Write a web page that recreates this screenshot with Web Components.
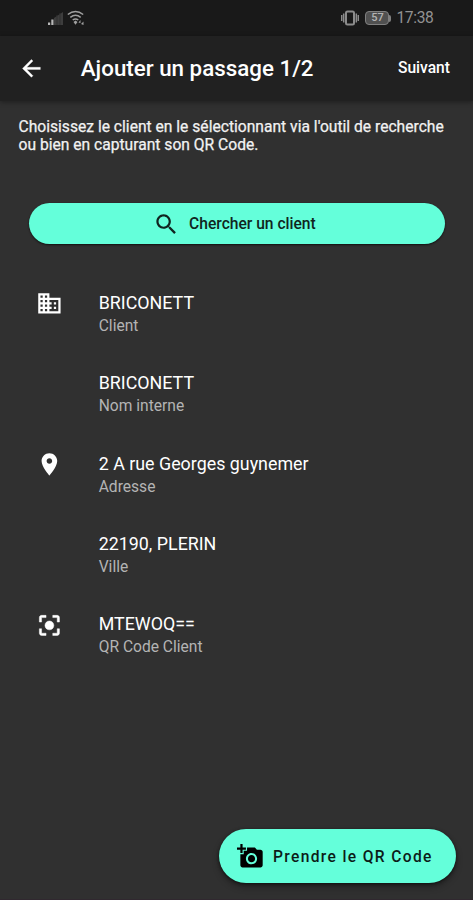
<!DOCTYPE html>
<html lang="fr">
<head>
<meta charset="utf-8">
<title>Ajouter un passage</title>
<style>
html,body{margin:0;height:100%;background:#303030}
body{font-family:Roboto,sans-serif;color:#fff;overflow:hidden}
</style>
</head>
<body>
<passage-screen></passage-screen>
<script>
const define = (name, html) => {
  const t = document.createElement('template');
  t.innerHTML = html;
  customElements.define(name, class extends HTMLElement {
    constructor() {
      super();
      this.attachShadow({mode: 'open'}).append(t.content.cloneNode(true));
    }
  });
};

const ICONS = {
  back: 'M20 11H7.83l5.59-5.59L12 4l-8 8 8 8 1.41-1.41L7.83 13H20v-2z',
  search: 'M15.5 14h-.79l-.28-.27C15.41 12.59 16 11.11 16 9.5 16 5.91 13.09 3 9.5 3S3 5.91 3 9.5 5.91 16 9.5 16c1.61 0 3.09-.59 4.23-1.57l.27.28v.79l5 4.99L20.49 19l-4.99-5zm-6 0C7.01 14 5 11.99 5 9.5S7.01 5 9.5 5 14 7.01 14 9.5 11.99 14 9.5 14z',
  business: 'M12 7V3H2v18h20V7H12zM6 19H4v-2h2v2zm0-4H4v-2h2v2zm0-4H4V9h2v2zm0-4H4V5h2v2zm4 12H8v-2h2v2zm0-4H8v-2h2v2zm0-4H8V9h2v2zm0-4H8V5h2v2zm10 12h-8v-2h2v-2h-2v-2h2v-2h-2V9h8v10zm-2-8h-2v2h2v-2zm0 4h-2v2h2v-2z',
  place: 'M12 2C8.13 2 5 5.13 5 9c0 5.25 7 13 7 13s7-7.75 7-13c0-3.87-3.13-7-7-7zm0 9.5c-1.38 0-2.5-1.12-2.5-2.5s1.12-2.5 2.5-2.5 2.5 1.12 2.5 2.5-1.12 2.5-2.5 2.5z',
  focus: 'M5 15H3v4c0 1.1.9 2 2 2h4v-2H5v-4zM5 5h4V3H5c-1.1 0-2 .9-2 2v4h2V5zm14-2h-4v2h4v4h2V5c0-1.1-.9-2-2-2zm0 16h-4v2h4c1.1 0 2-.9 2-2v-4h-2v4zM12 8c-2.21 0-4 1.79-4 4s1.79 4 4 4 4-1.79 4-4-1.79-4-4-4z',
  camera: 'M3 4V1h2v3h3v2H5v3H3V6H0V4h3zm3 6V7h3V4h7l1.83 2H21c1.1 0 2 .9 2 2v12c0 1.1-.9 2-2 2H5c-1.1 0-2-.9-2-2V10h3zm7 9c2.76 0 5-2.24 5-5s-2.24-5-5-5-5 2.24-5 5 2.24 5 5 5zm-3.2-5c0 1.77 1.43 3.2 3.2 3.2s3.2-1.43 3.2-3.2-1.43-3.2-3.2-3.2-3.2 1.43-3.2 3.2z'
};
customElements.define('md-icon', class extends HTMLElement {
  constructor() {
    super();
    this.attachShadow({mode: 'open'});
  }
  connectedCallback() {
    this.shadowRoot.innerHTML = `<style>:host{display:block;flex:none;width:26.8px;height:26.8px}svg{display:block;width:100%;height:100%;fill:currentColor;stroke:currentColor;stroke-width:var(--weight,0)}</style><svg viewBox="0 0 24 24"><path d="${ICONS[this.getAttribute('name')] || ''}"/></svg>`;
  }
});

define('status-bar', `<style>
:host{display:flex;align-items:center;box-sizing:border-box;height:36px;padding:0 39.500px 0 47px;background:#191919;color:#929292}
svg{display:block;flex:none}
.gap{flex:1}
.time{font-size:15.6px;line-height:20px;margin-left:5px;letter-spacing:-.35px}
.bat{display:flex;align-items:center;justify-content:center;box-sizing:border-box;width:24px;height:14px;margin-left:6px;border:1.5px solid #808080;border-radius:4px;background:#505050;font-size:11px;font-weight:500;line-height:12px;color:#b4b4b4}
.tip{width:2px;height:7px;background:#808080;border-radius:0 2px 2px 0}
</style>
<svg width="17" height="16" viewBox="0 0 17 16"><path fill="#3d3d3d" d="M7 8 16 2V15H7z"/><path fill="#b8b8b8" d="M1 12.5h2.2V15H1zM4.3 9.500h2.200V15H4.300z"/><path stroke="#303030" d="M10 5v10M13 3v12"/></svg>
<svg width="19" height="16" viewBox="0 0 19 16" style="margin-left:3px"><g fill="none" stroke="#a0a0a0" stroke-width="1.5"><path d="M.8 4.5Q8.500-1.500 16.200 4.500M3.300 7.300Q8.500 3.200 13.700 7.300M5.700 10Q8.500 7.800 11.300 10"/></g><path fill="#a0a0a0" d="m6.500 12 2-1.500 2 1.500-2 2.800zM11.500 12.500l2-2.500v3zM14 14l2.500-2.500V15z"/></svg>
<span class="gap"></span>
<svg width="18" height="16" viewBox="0 0 18 16"><g fill="none" stroke="#8c8c8c"><rect x="5" y="1.500" width="8" height="13" rx="1.500" stroke-width="2"/><path stroke-width="1.500" d="M2.700 3.500v9M15.300 3.500v9M.7 5v6M17.300 5v6"/></g></svg>
<span class="bat">57</span><span class="tip"></span>
<span class="time">17:38</span>`);

define('app-bar', `<style>
:host{display:flex;align-items:center;box-sizing:border-box;height:65px;padding:0 23px 0 18px;background:#212121;box-shadow:0 1px 5px rgba(0,0,0,.4);--weight:.3px}
.title{flex:1;margin-left:36px;padding-bottom:2px;font-size:22.35px;font-weight:500;line-height:28px;white-space:nowrap}
.action{padding-bottom:2px;font-size:15.6px;font-weight:500;line-height:20px;white-space:nowrap}
</style><md-icon name="back"></md-icon><span class="title"><slot></slot></span><span class="action"><slot name="action"></slot></span>`);

define('search-button', `<style>
:host{display:flex;align-items:center;justify-content:center;box-sizing:border-box;height:41px;margin:0 28px 0 29px;padding-right:5px;border-radius:21px;background:#64ffda;color:#102520;box-shadow:0 1px 2px #111;font-size:15.6px;font-weight:500;line-height:20px}
md-icon{margin-right:9px}
</style><md-icon name="search"></md-icon><span><slot></slot></span>`);

define('info-tile', `<style>
:host{display:flex;height:80.3px;padding-left:36.300px}
.icon{width:62.400px;padding-top:16.500px}
.title{font-size:17.85px;line-height:23px;padding-top:17px;padding-bottom:1px}
.sub{font-size:15.6px;line-height:23px;color:#b4b4b4}
</style><div class="icon"><slot name="icon"></slot></div><div class="text"><div class="title"><slot></slot></div><div class="sub"><slot name="sub"></slot></div></div>`);

define('qr-button', `<style>
:host{display:flex;align-items:center;box-sizing:border-box;width:237px;height:54px;padding:2px 0 0 18px;border-radius:27px;background:#64ffda;color:#0c1c18;box-shadow:0 1px 3px #111,0 4px 7px rgba(0,0,0,.3);font-size:15.6px;font-weight:500;line-height:20px;letter-spacing:1.35px;white-space:nowrap}
md-icon{margin-right:9.200px;color:#000}
</style><md-icon name="camera"></md-icon><span><slot></slot></span>`);

define('passage-screen', `<style>
:host{display:flex;flex-direction:column;box-sizing:border-box;width:473px;height:900px;background:#303030;border-bottom:1px solid #30282f}
p{margin:16.500px 18px 0 18.500px;font-size:15.63px;line-height:18.300px;color:#f2f2f2;white-space:nowrap;-webkit-text-stroke:.25px}
search-button{margin-top:49.400px}
.list{padding-top:29.500px;flex:1}
footer{display:flex;justify-content:flex-end;padding:0 17px 16.500px 0}
</style>
<status-bar></status-bar>
<app-bar>Ajouter un passage 1/2<span slot="action">Suivant</span></app-bar>
<p>Choisissez le client en le sélectionnant via l'outil de recherche<br>ou bien en capturant son QR Code.</p>
<search-button>Chercher un client</search-button>
<div class="list">
<info-tile><md-icon slot="icon" name="business"></md-icon>BRICONETT<span slot="sub">Client</span></info-tile>
<info-tile>BRICONETT<span slot="sub">Nom interne</span></info-tile>
<info-tile><md-icon slot="icon" name="place"></md-icon>2 A rue Georges guynemer<span slot="sub">Adresse</span></info-tile>
<info-tile>22190, PLERIN<span slot="sub">Ville</span></info-tile>
<info-tile><md-icon slot="icon" name="focus" style="--weight:.4px"></md-icon>MTEWOQ==<span slot="sub">QR Code Client</span></info-tile>
</div>
<footer><qr-button>Prendre le QR Code</qr-button></footer>`);
</script>
</body>
</html>
